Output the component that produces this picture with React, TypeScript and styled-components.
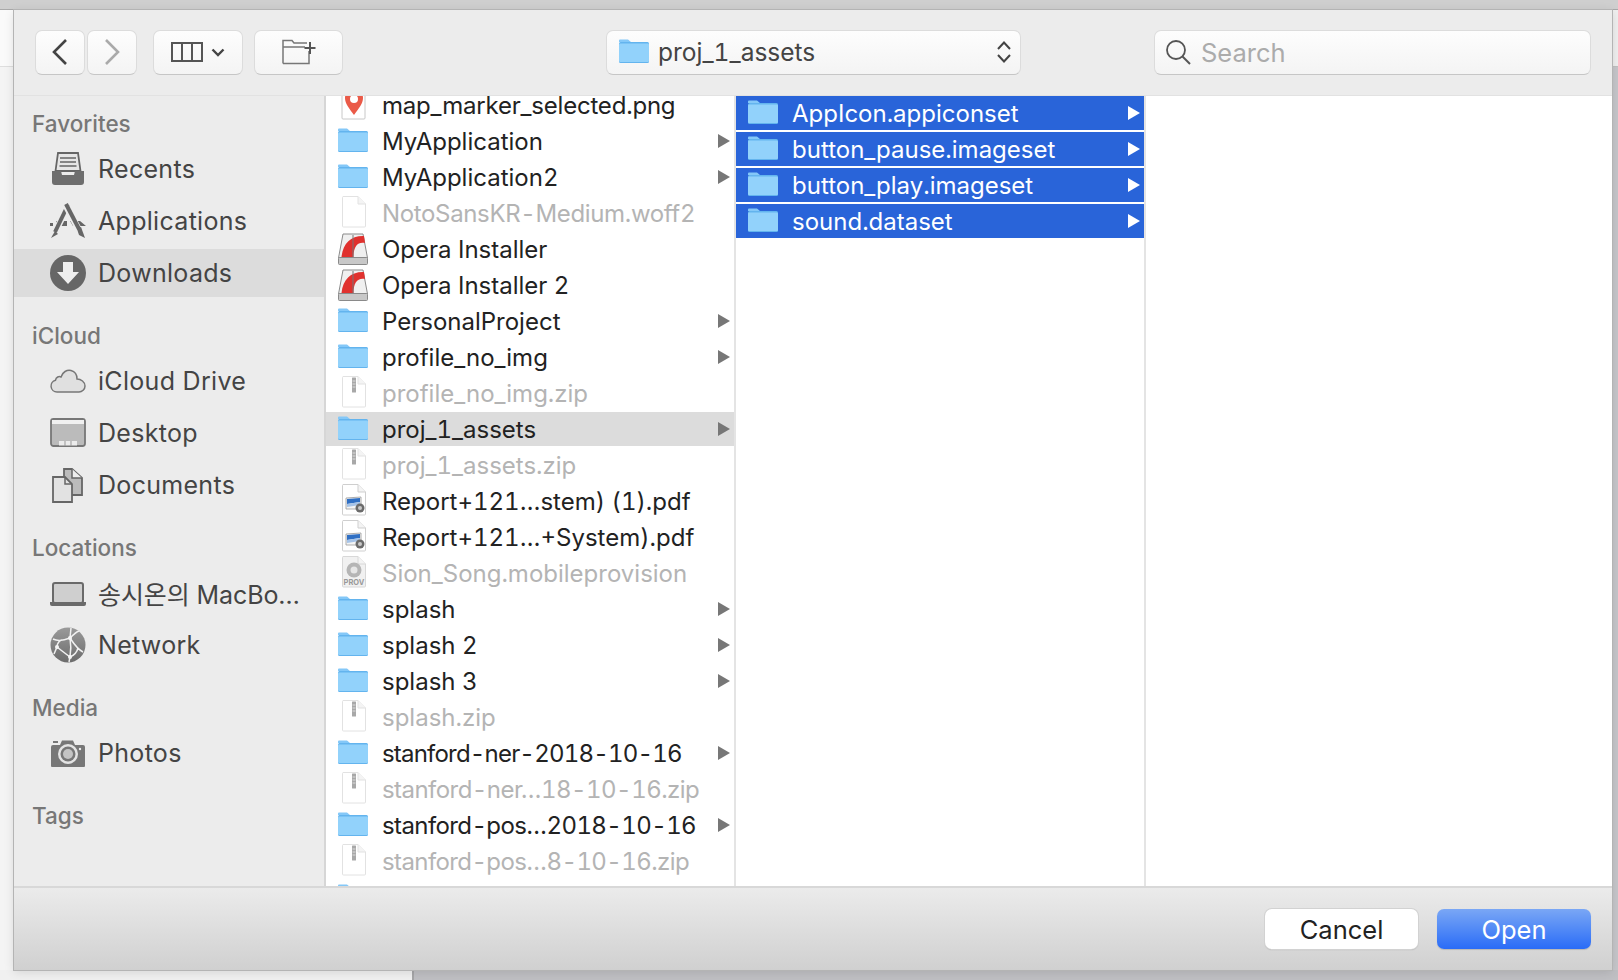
import React from "react";
import styled, { createGlobalStyle } from "styled-components";

const GlobalStyle = createGlobalStyle`
  html, body { margin: 0; padding: 0; background: #f3f3f3; }
  body { font-family: Inter, "Noto Sans CJK KR", "Liberation Sans", sans-serif; }
`;

const Page = styled.div`
  width: 1618px;
  height: 980px;
  overflow: hidden;
  display: grid;
  grid-template-columns: 14px 1fr 6px;
  grid-template-rows: 10px 960px 10px;
`;

const TopStrip = styled.div`
  grid-column: 1 / 4;
  background: #cfcfcf;
  border-bottom: 1px solid #a9a9a9;
  box-sizing: border-box;
`;

// what shows of the window behind the dialog, on the left and right
const Gutter = styled.div<{ $side: "left" | "right" }>`
  display: flex;
  flex-direction: column;
  background: ${(p) => (p.$side === "left" ? "#f4f4f4" : "#c6c6ca")};
  &::before {
    content: "";
    height: 56px;
    background: ${(p) => (p.$side === "left" ? "#fafafa" : "#efefef")};
    border-bottom: 1px solid ${(p) => (p.$side === "left" ? "#dedede" : "#c0c0c0")};
  }
`;

const BottomStrip = styled.div`
  grid-column: 1 / 4;
  display: flex;
`;

const BottomLeft = styled.div`
  width: 412px;
  background: #f0f0f0;
`;

const BottomRight = styled.div`
  flex: 1;
  background: #bfbfc3;
  border-left: 2px solid #a6a6a8;
`;

const Dialog = styled.div`
  display: flex;
  flex-direction: column;
  background: #ececec;
  box-shadow: 0 0 0 1px #b4b4b4, 0 2px 10px rgba(0, 0, 0, 0.12);
  position: relative;
`;

const Toolbar = styled.div`
  height: 86px;
  box-sizing: border-box;
  display: flex;
  align-items: center;
  padding: 0 21px 1px;
  background: #ececec;
  border-bottom: 1px solid #e2e2e2;
  color: #444;
`;

const ToolButton = styled.div<{ $w: number; $ml?: number }>`
  width: ${(p) => p.$w}px;
  height: 45px;
  margin-left: ${(p) => p.$ml ?? 0}px;
  box-sizing: border-box;
  display: flex;
  align-items: center;
  justify-content: center;
  gap: 8px;
  background: linear-gradient(#fdfdfd, #f4f4f4);
  border: 1px solid #dcdcdc;
  border-bottom: 1px solid #c6c6c6;
  border-radius: 7px;
`;

const PathPopup = styled(ToolButton)`
  justify-content: flex-start;
  padding: 0 8px 0 12px;
  gap: 9px;
  font-size: 24.500px;
  font-feature-settings: "tnum";
  color: #444;
`;

const PopupLabel = styled.span`
  flex: 1;
`;

const SearchField = styled(ToolButton)`
  justify-content: flex-start;
  padding: 0 10px;
  gap: 10px;
  font-size: 25.5px;
  color: #ababab;
`;

const Body = styled.div`
  flex: 1;
  min-height: 0;
  display: flex;
`;

const Sidebar = styled.div`
  width: 312px;
  box-sizing: border-box;
  padding-top: 9px;
  background: #ececec;
  border-right: 2px solid #d6d6d6;
`;

const Section = styled.div`
  display: flex;
  flex-direction: column;
  margin-bottom: 18px;
`;

const SectionTitle = styled.div`
  height: 38px;
  line-height: 38px;
  padding-left: 18px;
  font-size: 22.500px;
  font-weight: 500;
  color: #777;
`;

const SideItem = styled.div<{ $active?: boolean; $track?: number }>`
  height: 48px;
  margin: 2px 0;
  padding-left: 36px;
  display: flex;
  align-items: center;
  gap: 12px;
  font-size: 25px;
  letter-spacing: ${(p) => p.$track ?? 0.3}px;
  color: #444;
  white-space: nowrap;
  background: ${(p) => (p.$active ? "#dcdcdc" : "transparent")};
`;

const Column = styled.div<{ $w: number }>`
  width: ${(p) => p.$w}px;
  box-sizing: border-box;
  flex: none;
  overflow: hidden;
  background: #fff;
  border-right: 2px solid #e4e4e4;
`;

const LastColumn = styled.div`
  flex: 1;
  background: #fff;
`;

const FileList = styled.div<{ $scroll?: number }>`
  margin-top: ${(p) => p.$scroll ?? 0}px;
`;

const Row = styled.div<{ $state?: "selected" | "muted" | "path"; $track?: number }>`
  height: 34px;
  margin-bottom: 2px;
  padding: 0 4px 0 12px;
  display: flex;
  align-items: center;
  gap: 14px;
  font-size: 24px;
  font-feature-settings: "tnum";
  letter-spacing: ${(p) => p.$track ?? 0}px;
  white-space: nowrap;
  color: ${(p) => (p.$state === "selected" ? "#fff" : p.$state === "muted" ? "#b4b4b4" : "#222")};
  background: ${(p) => (p.$state === "selected" ? "#2964d9" : p.$state === "path" ? "#dcdcdc" : "transparent")};
`;

const RowIcon = styled.svg`
  width: 30px;
  height: 34px;
  flex: none;
  overflow: visible;
`;

const RowName = styled.span`
  flex: 1;
`;

const Arrow = styled.span<{ $light?: boolean }>`
  width: 0;
  height: 0;
  flex: none;
  border-left: 12px solid ${(p) => (p.$light ? "#fff" : "#777")};
  border-top: 7px solid transparent;
  border-bottom: 7px solid transparent;
`;

const BottomBar = styled.div`
  height: 84px;
  box-sizing: border-box;
  display: flex;
  align-items: center;
  justify-content: flex-end;
  gap: 19px;
  padding: 0 21px;
  background: linear-gradient(#ebebeb, #d0d0d0);
  border-top: 2px solid #d8d8d8;
`;

const FooterButton = styled.div<{ $primary?: boolean }>`
  width: ${(p) => (p.$primary ? 154 : 153)}px;
  height: 40px;
  box-sizing: border-box;
  display: flex;
  align-items: center;
  justify-content: center;
  font-size: 25.5px;
  border-radius: 7px;
  color: ${(p) => (p.$primary ? "#fff" : "#222")};
  background: ${(p) => (p.$primary ? "linear-gradient(#7aa7f5, #2a6cf7)" : "#fff")};
  box-shadow: ${(p) => (p.$primary ? "0 1px 1px rgba(0,0,0,.15)" : "0 0 0 1px #d2d2d2, 0 1px 1px rgba(0,0,0,.3)")};
`;

const SideSvg = styled.svg`
  width: 36px;
  height: 36px;
  flex: none;
`;

function Folder() {
  return (
    <g transform="translate(0,-2)">
      <path d="M0 7.500 a1 1 0 0 1 1-1 h8 l3 2.500 h-12z" fill="#84c8f8" />
      <rect x="0" y="9" width="30" height="21" rx="1.500" fill="#63b4ee" />
      <rect x="0" y="10.500" width="30" height="18.500" rx="1" fill="#92d2fb" />
    </g>
  );
}

function Sheet({ fill = "#fff", line = "#e2e2e2" }: { fill?: string; line?: string }) {
  return (
    <g>
      <path d="M5 0.500 h15 l7.500 7.500 v22 a1 1 0 0 1-1 1 h-21 a1 1 0 0 1-1-1 v-28.500 a1 1 0 0 1 1-1z" fill={fill} stroke={line} strokeWidth="1" />
      <path d="M20 0.500 v7.500 h7.500" fill="#f4f4f4" stroke={line} strokeWidth="1" />
    </g>
  );
}

function FileIcon({ kind }: { kind: string }) {
  return (
    <RowIcon viewBox="0 0 30 34">
      {kind === "folder" && <Folder />}
      {kind === "opera" && (
        <g>
          <path d="M5 2 h20 l4.500 24 h-29z" fill="#f0f0f0" stroke="#8a8a8a" strokeWidth="1" />
          <path d="M3.500 25 C5 11 13 3.500 26 4 L27 11 C20 9.500 15.500 14 15.500 25z" fill="#e0312e" />
          <path d="M15 3 v23" stroke="#777" strokeWidth="1" />
          <rect x="0.500" y="25.500" width="29" height="7" rx="1" fill="#c8c8c8" stroke="#8a8a8a" strokeWidth="1" />
        </g>
      )}
      {kind === "doc" && <Sheet />}
      {kind === "zip" && (
        <g>
          <Sheet />
          <rect x="14" y="1.500" width="4" height="15" fill="#a8a8a8" rx="0.500" />
          <path d="M14.500 5 h3 M14.500 8 h3 M14.500 11 h3" stroke="#e8e8e8" strokeWidth="0.800" />
        </g>
      )}
      {kind === "pdf" && (
        <g>
          <Sheet line="#cfcfcf" />
          <path d="M8 14 l15 -1 v12 h-15z" fill="#f4f4f4" stroke="#999" strokeWidth="0.800" />
          <path d="M9 15 l13 -1 v4 l-13 2z" fill="#2f6fc4" />
          <path d="M9 20 l13 -2 v3 l-13 2z" fill="#a5c3e8" />
          <circle cx="22" cy="24" r="4.500" fill="#6b6b6b" />
          <circle cx="22" cy="24" r="2" fill="#c9c9c9" />
        </g>
      )}
      {kind === "prov" && (
        <g>
          <Sheet fill="#f1f1f1" line="#d8d8d8" />
          <circle cx="16" cy="14" r="7.500" fill="#b5b5b5" />
          <circle cx="16" cy="14" r="3.500" fill="#e6e6e6" />
          <text x="16" y="29" fontSize="7.500" fontWeight="700" textAnchor="middle" fill="#999">PROV</text>
        </g>
      )}
      {kind === "png" && (
        <g>
          <path d="M5 0 h21 a1 1 0 0 1 1 1 v29 a1 1 0 0 1-1 1 h-21 a1 1 0 0 1-1-1 v-29 a1 1 0 0 1 1-1z" fill="#fff" stroke="#c8c8c8" strokeWidth="1" />
          <path d="M16 27 C11 20 7 15.500 7 10 a9 9 0 0 1 18 0 C25 15.500 21 20 16 27z" fill="#ea5a48" />
          <circle cx="16" cy="11" r="4" fill="#fff" />
        </g>
      )}
    </RowIcon>
  );
}

function RowArrow({ light }: { light?: boolean }) {
  return <Arrow $light={light} />;
}

function RecentsIcon() {
  return (
    <SideSvg viewBox="0 0 36 36">
      <path d="M8 2 h20 l2.500 18 h-25z" fill="#e6e6e6" stroke="#666" strokeWidth="1.800" />
      <path d="M10 7 h16 M10 11 h16 M9.500 15 h17" stroke="#666" strokeWidth="1.500" />
      <path d="M2 20 h9 l1 4 h12 l1-4 h9 v11 a3 3 0 0 1-3 3 h-26 a3 3 0 0 1-3-3z" fill="#6e6e6e" />
    </SideSvg>
  );
}

function ApplicationsIcon() {
  return (
    <SideSvg viewBox="0 0 36 36">
      <path d="M0 20 l3 0 l0 3 h-3z M6 18 h11 v5 h-11z M20 18 h10 l6 5 h-13z" fill="#666" />
      <path d="M18 3 L5 29" stroke="#ececec" strokeWidth="6.500" fill="none" />
      <path d="M18 2 L5 29" stroke="#666" strokeWidth="4" fill="none" />
      <path d="M5 28 L1 35 L8 31z" fill="#666" />
      <path d="M16 3 L29 27" stroke="#ececec" strokeWidth="6.500" fill="none" />
      <path d="M16 1 L29 26" stroke="#666" strokeWidth="4" fill="none" />
      <path d="M27 26 L31 24 L35 35 L29 32z" fill="#666" />
    </SideSvg>
  );
}

function DownloadsIcon() {
  return (
    <SideSvg viewBox="0 0 36 36">
      <circle cx="18" cy="18" r="18" fill="#666" />
      <path d="M13 7 h10 v10 h6 L18 29 L7 17 h6z" fill="#eee" />
    </SideSvg>
  );
}

function CloudIcon() {
  return (
    <SideSvg viewBox="0 0 36 36">
      <path d="M7 29 a6 6 0 0 1-1.500-11.800 C6 14 9 13 11 14 C12.500 9 17 6.500 21 7.500 C25 8.500 27 12 27 16 C31 16 35 19 35 23 C35 26.500 32 29 29 29z" fill="#e0e0e0" stroke="#777" strokeWidth="1.500" />
    </SideSvg>
  );
}

function DesktopIcon() {
  return (
    <SideSvg viewBox="0 0 36 36">
      <rect x="1" y="4" width="34" height="27" rx="2.500" fill="#bbb" stroke="#777" strokeWidth="1.800" />
      <rect x="2" y="5" width="32" height="4" fill="#f0f0f0" />
      <rect x="9" y="26" width="18" height="4.500" fill="#ececec" />
      <path d="M15 26 v5 M21 26 v5" stroke="#999" strokeWidth="1" />
    </SideSvg>
  );
}

function DocumentsIcon() {
  return (
    <SideSvg viewBox="0 0 36 36">
      <path d="M14 2 h8 l10 9 v17 h-18z" fill="#bbb" stroke="#666" strokeWidth="1.800" />
      <path d="M22 2 v9 h10" fill="#eee" stroke="#666" strokeWidth="1.500" />
      <path d="M3 10 h12 l7 7 v18 h-19z" fill="#e2e2e2" stroke="#666" strokeWidth="1.800" />
      <path d="M15 10 v7 h7" fill="none" stroke="#666" strokeWidth="1.500" />
    </SideSvg>
  );
}

function LaptopIcon() {
  return (
    <SideSvg viewBox="0 0 36 36">
      <rect x="3" y="8" width="30" height="20" rx="2" fill="#cfcfcf" stroke="#6a6a6a" strokeWidth="2" />
      <path d="M0 27 h36 v2 a2 2 0 0 1-2 2 h-32 a2 2 0 0 1-2-2z" fill="#6a6a6a" />
    </SideSvg>
  );
}

function NetworkIcon() {
  return (
    <SideSvg viewBox="0 0 36 36">
      <defs>
        <linearGradient id="globe" x1="0" y1="0" x2="0" y2="1">
          <stop offset="0" stopColor="#9a9a9a" />
          <stop offset="1" stopColor="#6c6c6c" />
        </linearGradient>
      </defs>
      <circle cx="18" cy="18" r="17.500" fill="url(#globe)" />
      <path
        d="M3 12 C9 15 15 13 20 11 C23 8 26 5 29 4 M20 11 C24 17 27 22 33 25 M20 11 L21 1 M7 20 C12 24 16 27 20 30 L19 35 M20 30 C25 28 27 25 28 21 M7 20 L4 27 M7 20 C7 16 10 13 12 13 M20 30 C21 24 21 17 20 11"
        fill="none"
        stroke="#f0f0f0"
        strokeWidth="1.500"
      />
      <circle cx="7" cy="20" r="2" fill="#f5f5f5" />
      <circle cx="20" cy="11" r="2" fill="#f5f5f5" />
      <circle cx="20" cy="30" r="2" fill="#f5f5f5" />
    </SideSvg>
  );
}

function CameraIcon() {
  return (
    <SideSvg viewBox="0 0 36 36">
      <path d="M3 6 h5 v2 h-5z" fill="#777" />
      <path d="M1 12 a2 2 0 0 1 2-2 h7 l2-4.500 h11 l2 4.500 h8 a2 2 0 0 1 2 2 v19 a1 1 0 0 1-1 1 h-32 a1 1 0 0 1-1-1z" fill="#777" />
      <circle cx="18" cy="19" r="10" fill="#e4e4e4" />
      <circle cx="18" cy="19" r="7.500" fill="#777" />
      <circle cx="18" cy="19" r="5" fill="#c4c4c4" />
      <circle cx="30" cy="14" r="1.200" fill="#eee" />
    </SideSvg>
  );
}

type SideEntry = { label: string; icon: React.ReactNode; active?: boolean; track?: number };

const sections: { title: string; items: SideEntry[] }[] = [
  {
    title: "Favorites",
    items: [
      { label: "Recents", icon: <RecentsIcon /> },
      { label: "Applications", icon: <ApplicationsIcon /> },
      { label: "Downloads", icon: <DownloadsIcon />, active: true },
    ],
  },
  {
    title: "iCloud",
    items: [
      { label: "iCloud Drive", icon: <CloudIcon /> },
      { label: "Desktop", icon: <DesktopIcon /> },
      { label: "Documents", icon: <DocumentsIcon /> },
    ],
  },
  {
    title: "Locations",
    items: [
      { label: "송시온의 MacBo…", icon: <LaptopIcon />, track: -0.1 },
      { label: "Network", icon: <NetworkIcon /> },
    ],
  },
  { title: "Media", items: [{ label: "Photos", icon: <CameraIcon /> }] },
  { title: "Tags", items: [] },
];

type FileRow = { name: string; kind: string; muted?: boolean; path?: boolean; track?: number };

const files: FileRow[] = [
  { name: "map_marker_selected.png", kind: "png", track: -0.2 },
  { name: "MyApplication", kind: "folder" },
  { name: "MyApplication2", kind: "folder" },
  { name: "NotoSansKR-Medium.woff2", kind: "doc", muted: true, track: -0.35 },
  { name: "Opera Installer", kind: "opera" },
  { name: "Opera Installer 2", kind: "opera" },
  { name: "PersonalProject", kind: "folder" },
  { name: "profile_no_img", kind: "folder" },
  { name: "profile_no_img.zip", kind: "zip", muted: true },
  { name: "proj_1_assets", kind: "folder", path: true },
  { name: "proj_1_assets.zip", kind: "zip", muted: true },
  { name: "Report+121…stem) (1).pdf", kind: "pdf" },
  { name: "Report+121…+System).pdf", kind: "pdf" },
  { name: "Sion_Song.mobileprovision", kind: "prov", muted: true },
  { name: "splash", kind: "folder" },
  { name: "splash 2", kind: "folder" },
  { name: "splash 3", kind: "folder" },
  { name: "splash.zip", kind: "zip", muted: true },
  { name: "stanford-ner-2018-10-16", kind: "folder", track: -0.8 },
  { name: "stanford-ner…18-10-16.zip", kind: "zip", muted: true, track: -0.55 },
  { name: "stanford-pos…2018-10-16", kind: "folder", track: -0.6 },
  { name: "stanford-pos…8-10-16.zip", kind: "zip", muted: true, track: -0.6 },
  { name: "", kind: "folder" },
];

const selected = ["AppIcon.appiconset", "button_pause.imageset", "button_play.imageset", "sound.dataset"];

export default function App() {
  return (
    <Page>
      <GlobalStyle />
      <TopStrip />
      <Gutter $side="left" />
      <Dialog>
        <Toolbar>
          <ToolButton $w={50}>
            <svg width="18" height="28" viewBox="0 0 18 28">
              <path d="M15 2 L3 14 L15 26" fill="none" stroke="#444" strokeWidth="2.600" />
            </svg>
          </ToolButton>
          <ToolButton $w={50} $ml={2}>
            <svg width="18" height="28" viewBox="0 0 18 28">
              <path d="M3 2 L15 14 L3 26" fill="none" stroke="#aaa" strokeWidth="2.600" />
            </svg>
          </ToolButton>
          <ToolButton $w={90} $ml={16}>
            <svg width="32" height="20" viewBox="0 0 32 20">
              <rect x="1" y="1" width="30" height="18" fill="none" stroke="#555" strokeWidth="2" />
              <path d="M11 1 v18 M21 1 v18" stroke="#555" strokeWidth="2" />
            </svg>
            <svg width="14" height="9" viewBox="0 0 14 9">
              <path d="M1.500 1.500 L7 7 L12.500 1.500" fill="none" stroke="#444" strokeWidth="2.400" />
            </svg>
          </ToolButton>
          <ToolButton $w={89} $ml={11}>
            <svg width="34" height="26" viewBox="0 0 34 26">
              <path d="M1 24.500 V1.500 h9 l2 2.500 h13 M1 8 h22 M27 12 v12.500 h-26" fill="none" stroke="#777" strokeWidth="1.500" />
              <path d="M28 3 v12 M22.500 9 h11" stroke="#555" strokeWidth="2" />
            </svg>
          </ToolButton>
          <PathPopup $w={415} $ml={263}>
            <svg width="30" height="34" viewBox="0 0 30 34">
              <Folder />
            </svg>
            <PopupLabel>proj_1_assets</PopupLabel>
            <svg width="16" height="24" viewBox="0 0 16 24">
              <path d="M2 9 L8 2.500 L14 9 M2 15 L8 21.500 L14 15" fill="none" stroke="#444" strokeWidth="2" />
            </svg>
          </PathPopup>
          <SearchField $w={437} $ml={133}>
            <svg width="26" height="26" viewBox="0 0 26 26">
              <circle cx="11" cy="11" r="9" fill="none" stroke="#555" strokeWidth="1.800" />
              <path d="M17.500 17.500 L25 25" stroke="#555" strokeWidth="2" />
            </svg>
            Search
          </SearchField>
        </Toolbar>
        <Body>
          <Sidebar>
            {sections.map((s) => (
              <Section key={s.title}>
                <SectionTitle>{s.title}</SectionTitle>
                {s.items.map((it) => (
                  <SideItem key={it.label} $active={it.active} $track={it.track}>
                    {it.icon}
                    {it.label}
                  </SideItem>
                ))}
              </Section>
            ))}
          </Sidebar>
          <Column $w={410}>
            <FileList $scroll={-8}>
              {files.map((f, i) => (
                <Row key={i} $track={f.track} $state={f.path ? "path" : f.muted ? "muted" : undefined}>
                  <FileIcon kind={f.kind} />
                  <RowName>{f.name}</RowName>
                  {f.kind === "folder" && f.name && <RowArrow />}
                </Row>
              ))}
            </FileList>
          </Column>
          <Column $w={410}>
            <FileList>
              {selected.map((name) => (
                <Row key={name} $state="selected">
                  <FileIcon kind="folder" />
                  <RowName>{name}</RowName>
                  <RowArrow light />
                </Row>
              ))}
            </FileList>
          </Column>
          <LastColumn />
        </Body>
        <BottomBar>
          <FooterButton>Cancel</FooterButton>
          <FooterButton $primary>Open</FooterButton>
        </BottomBar>
      </Dialog>
      <Gutter $side="right" />
      <BottomStrip>
        <BottomLeft />
        <BottomRight />
      </BottomStrip>
    </Page>
  );
}
